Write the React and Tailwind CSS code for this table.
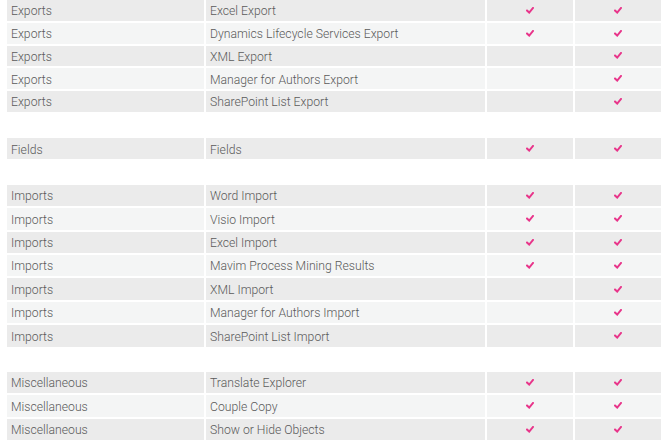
import React from "react";

const groups = [
  [
    ["Exports", "Excel Export", true, true],
    ["Exports", "Dynamics Lifecycle Services Export", true, true],
    ["Exports", "XML Export", false, true],
    ["Exports", "Manager for Authors Export", false, true],
    ["Exports", "SharePoint List Export", false, true],
  ],
  [["Fields", "Fields", true, true]],
  [
    ["Imports", "Word Import", true, true],
    ["Imports", "Visio Import", true, true],
    ["Imports", "Excel Import", true, true],
    ["Imports", "Mavim Process Mining Results", true, true],
    ["Imports", "XML Import", false, true],
    ["Imports", "Manager for Authors Import", false, true],
    ["Imports", "SharePoint List Import", false, true],
  ],
  [
    ["Miscellaneous", "Translate Explorer", true, true],
    ["Miscellaneous", "Couple Copy", true, true],
    ["Miscellaneous", "Show or Hide Objects", true, true],
  ],
];

function Check() {
  return (
    <svg width="8" height="7" viewBox="0 0 8 7" className="block">
      <path d="M1 3.6 L3.2 5.6 L7 1" fill="none" stroke="#e8358a" strokeWidth="2" strokeLinecap="square" />
    </svg>
  );
}

function Row({ row, shade, first }) {
  const bg = shade ? "bg-[#ebebeb]" : "bg-[#f4f5f5]";
  return (
    <div
      className={`grid grid-cols-[197px_279px_86px_86px] gap-[2px] ${first ? "h-[20.8px]" : "h-[21.4px]"}`}
    >
      <div className={`${bg} pl-[4px] pt-[2px] flex items-center`}>{row[0]}</div>
      <div className={`${bg} pl-[4px] pt-[2px] flex items-center`}>{row[1]}</div>
      <div className={`${bg} flex items-center justify-center`}>{row[2] ? <Check /> : null}</div>
      <div className={`${bg} flex items-center justify-center`}>{row[3] ? <Check /> : null}</div>
    </div>
  );
}

export default function App() {
  return (
    <div
      className="bg-white w-[670px] h-[447px] overflow-hidden pl-[7px] text-[12.2px] font-light text-[#5a5a5a]"
      style={{ fontFamily: "Roboto, 'Liberation Sans', sans-serif" }}
    >
      <div className="flex flex-col gap-[2px]">
        {groups.map((g, gi) => (
          <React.Fragment key={gi}>
            {gi > 0 && <div className={gi === 1 ? "h-[22px]" : "h-[21.4px]"} />}
            {g.map((r, ri) => (
              <Row key={ri} row={r} shade={ri % 2 === 0} first={gi === 0} />
            ))}
          </React.Fragment>
        ))}
      </div>
    </div>
  );
}
